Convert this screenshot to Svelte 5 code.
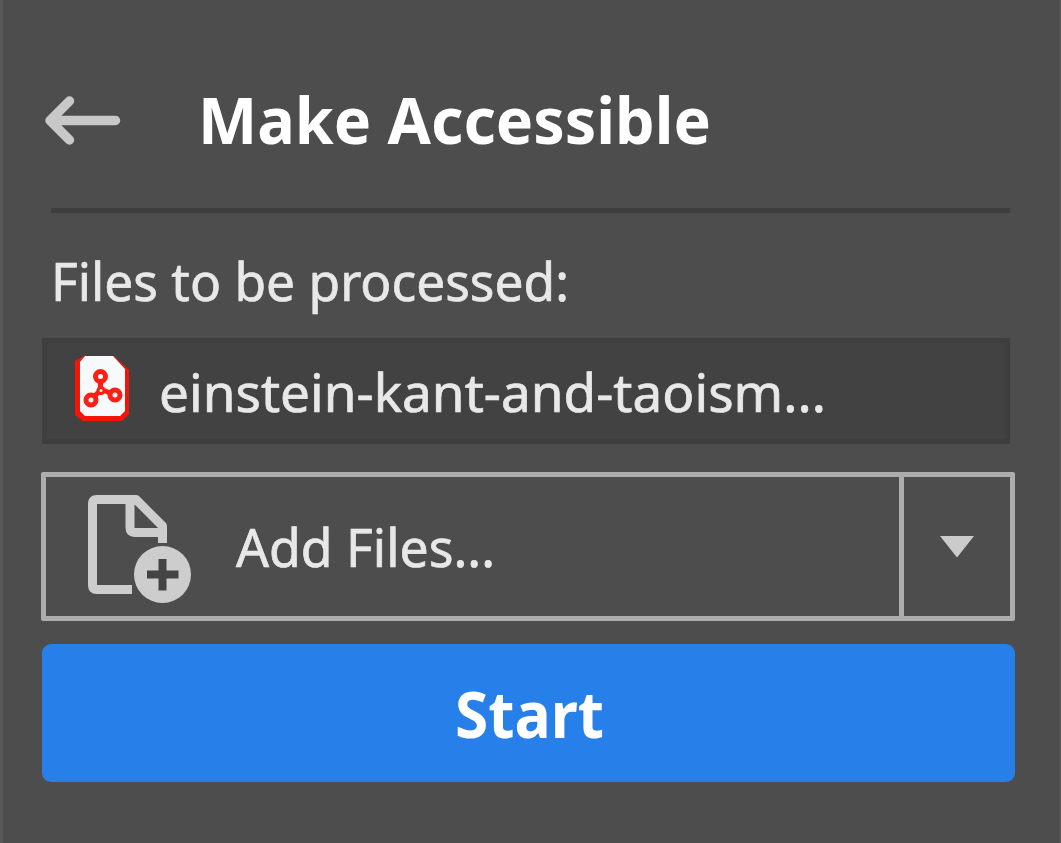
<script>
  const files = ['einstein-kant-and-taoism...'];
</script>

{#snippet label(text, x, width, size, weight)}
  <svg class="label" class:regular={weight === 400} width={x + width + 8} height="90" aria-label={text}>
    <text {x} y="65" textLength={width} lengthAdjust="spacingAndGlyphs" font-size={size} font-weight={weight}>{text}</text>
  </svg>
{/snippet}

<main class="panel">
  <header>
    <svg class="back" width="84" height="56" viewBox="0 0 84 56">
      <path d="M31.500 9 L12 28.500 L31.500 48 M13 28.500 H77.500" />
    </svg>
    <h1>{@render label('Make Accessible', 4, 513, 64, 700)}</h1>
  </header>
  <hr />
  <p class="caption">{@render label('Files to be processed:', 3, 518, 53, 400)}</p>
  {#each files as file}
    <div class="file">
      <svg class="pdf" width="60" height="70" viewBox="0 0 60 70">
        <path class="red" d="M11 2 H41 L56 16 V60 L49 67 H10 L2 61 V7 Z" />
        <path class="paper" d="M12 2 H40 L52 15 V57 L47 62 H12 L7 57 V8 Z" />
        <g class="links">
          <path d="M27.500 23 V36 L18 46 M27.500 35 L42 41" />
          <circle cx="27.500" cy="22.500" r="5" />
          <circle cx="18" cy="46" r="5" />
          <circle cx="42" cy="41" r="5" />
          <circle class="hub" cx="28" cy="36.500" r="3" />
        </g>
      </svg>
      {@render label(file, 4, 667, 53, 400)}
    </div>
  {/each}
  <div class="split">
    <button class="add">
      <svg class="doc" width="110" height="112" viewBox="0 0 110 112">
        <path d="M48 98.500 H12.500 Q8.500 98.500 8.500 94.500 V12.500 Q8.500 8.500 12.500 8.500 H52 L78.500 35 V52 M46 9 V37 Q46 41.500 50.500 41.500 H78" />
        <circle cx="78.500" cy="83.500" r="28.500" />
        <path class="plus" d="M78.500 68 V99.500 M63 83.500 H94.500" />
      </svg>
      {@render label('Add Files...', 1, 259, 53, 400)}
    </button>
    <button class="more" aria-label="More">
      <svg width="34" height="22" viewBox="0 0 34 22"><path d="M0 0 H34 L17 21.500 Z" /></svg>
    </button>
  </div>
  <button class="start">{@render label('Start', 2, 149, 64, 700)}</button>
</main>

<style>
  :global(body) { margin: 0; background: #4d4d4d; }
  .panel {
    box-sizing: border-box;
    width: 1061px;
    height: 843px;
    padding: 76px 44px 0 39px;
    background: #4d4d4d;
    border-left: 3px solid #5a5a5a;
    border-right: 2px solid #555;
    font-family: 'Noto Sans', 'Open Sans', sans-serif;
    overflow: hidden;
  }
  button { padding: 0; margin: 0; background: none; border: 0; border-radius: 0; font-family: inherit; }
  .label { display: block; flex: none; fill: #e8e8e8; overflow: visible; }
  .regular { stroke: #e8e8e8; stroke-width: 0.7px; }
  header { display: flex; height: 132px; }
  .back { margin: 16px 72px 0 -4px; fill: none; stroke: #c8c8c8; stroke-width: 9.5; stroke-linecap: round; stroke-linejoin: round; }
  h1 { margin: 3px 0 0; }
  h1 :global(.label) { fill: #fff; }
  hr { margin: 0 5px 0 9px; height: 5px; border: 0; background: #3e3e3e; }
  .caption { margin: 23px 0 0 6px; height: 102px; }
  .file {
    box-sizing: border-box;
    display: flex;
    width: 968px;
    height: 106px;
    padding: 11px 0 0 26px;
    background: #424242;
    border: 5px solid #3e3e3e;
  }
  .pdf { flex: none; margin-right: 22px; }
  .file :global(.label) { margin-top: -7px; }
  .red { fill: #f51408; }
  .paper { fill: #f7fafa; }
  .links { fill: #f7fafa; stroke: #fb2015; stroke-width: 5; }
  .hub { stroke-width: 3; }
  .split {
    box-sizing: border-box;
    display: flex;
    width: 974px;
    height: 149px;
    margin: 28px 0 0 -1px;
    border: 5px solid #adadad;
    border-radius: 2px;
  }
  .add { display: flex; width: 853px; height: 139px; }
  .doc { margin: 14px 41px 0 38px; flex: none; fill: none; stroke: #cdcdcd; stroke-width: 9; stroke-linejoin: round; stroke-linecap: butt; }
  .doc circle { fill: #cdcdcd; stroke: none; }
  .doc .plus { stroke: #444; stroke-width: 8; }
  .add :global(.label) { margin-top: 25px; }
  .more { display: flex; flex: 1; align-items: center; justify-content: center; border-left: 5px solid #adadad; }
  .more svg { fill: #cbcbcb; }
  .start {
    display: flex;
    width: 973px;
    height: 138px;
    margin-top: 23px;
    padding-left: 411px;
    box-sizing: border-box;
    border-radius: 9px;
    background: #2780e9;
  }
  .start :global(.label) { fill: #fff; margin-top: 29px; }
</style>
